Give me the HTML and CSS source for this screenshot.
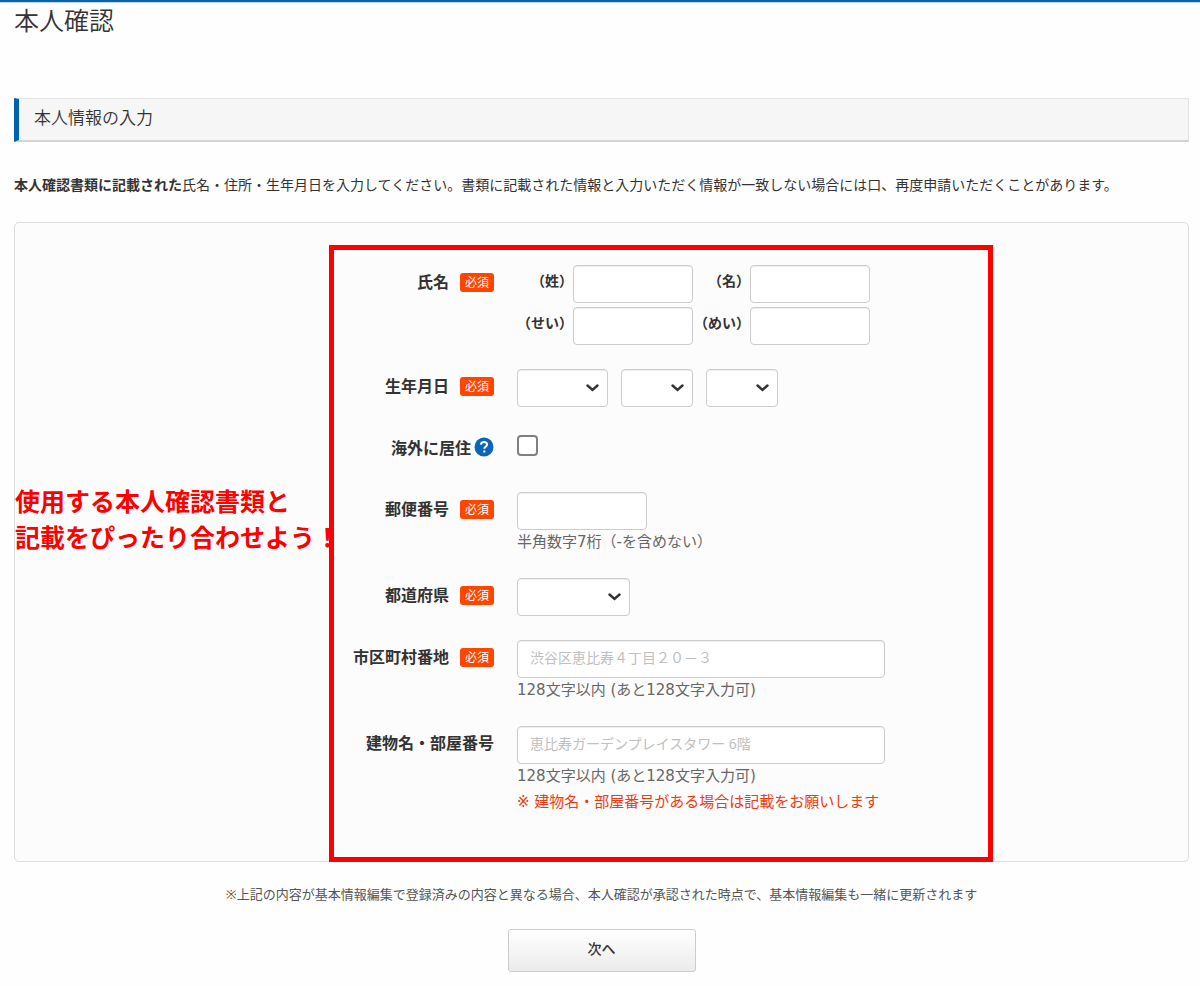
FILE: index.html
```html
<!DOCTYPE html>
<html lang="ja">
<head>
<meta charset="utf-8">
<meta name="viewport" content="width=device-width, initial-scale=1">
<title>本人確認</title>
<link rel="stylesheet" href="styles.css">
</head>
<body>
<main class="page">
  <h1 class="page-title">本人確認</h1>
  <h2 class="section-title">本人情報の入力</h2>
  <p class="intro"><strong>本人確認書類に記載された</strong>氏名・住所・生年月日を入力してください。書類に記載された情報と入力いただく情報が一致しない場合には口、再度申請いただくことがあります。</p>

  <form>
    <div class="panel">
      <p class="callout">使用する本人確認書類と<br>記載をぴったり合わせよう！</p>
      <div class="fields">
        <div class="row">
          <div class="row-label"><span>氏名</span><span class="tag">必須</span></div>
          <div class="names">
            <label for="sei">（姓）</label><input class="box" id="sei" type="text">
            <label for="mei">（名）</label><input class="box" id="mei" type="text">
            <label for="sei-kana">（せい）</label><input class="box" id="sei-kana" type="text">
            <label for="mei-kana">（めい）</label><input class="box" id="mei-kana" type="text">
          </div>
        </div>

        <div class="row">
          <div class="row-label"><label for="year">生年月日</label><span class="tag">必須</span></div>
          <div class="dates">
            <span class="select year"><select class="box" id="year" aria-label="年"><option></option></select><svg class="chevron" viewBox="0 0 12 8"><path d="M1 1.5 6 6l5-4.5"/></svg></span>
            <span class="select day"><select class="box" aria-label="月"><option></option></select><svg class="chevron" viewBox="0 0 12 8"><path d="M1 1.5 6 6l5-4.5"/></svg></span>
            <span class="select day"><select class="box" aria-label="日"><option></option></select><svg class="chevron" viewBox="0 0 12 8"><path d="M1 1.5 6 6l5-4.5"/></svg></span>
          </div>
        </div>

        <div class="row">
          <div class="row-label help-label"><label for="overseas">海外に居住</label><svg class="help-icon" viewBox="0 0 20 20" role="img" aria-label="ヘルプ"><circle cx="10" cy="9" r="9.5"/><path d="M6.9 6.6C7 4.8 8.2 3.9 10 3.9s3.1 1 3.1 2.5c0 2.2-2.8 2.2-2.8 4.3M10.3 12.4v2"/></svg></div>
          <div class="check-cell"><input class="check" id="overseas" type="checkbox"></div>
        </div>

        <div class="row">
          <div class="row-label"><label for="zip">郵便番号</label><span class="tag">必須</span></div>
          <div>
            <input class="box zip" id="zip" type="text">
            <p class="hint">半角数字7桁（-を含めない）</p>
          </div>
        </div>

        <div class="row">
          <div class="row-label"><label for="pref">都道府県</label><span class="tag">必須</span></div>
          <div>
            <span class="select pref"><select class="box" id="pref"><option></option></select><svg class="chevron" viewBox="0 0 12 8"><path d="M1 1.5 6 6l5-4.5"/></svg></span>
          </div>
        </div>

        <div class="row">
          <div class="row-label"><label for="city">市区町村番地</label><span class="tag">必須</span></div>
          <div>
            <input class="box address" id="city" type="text" placeholder="渋谷区恵比寿４丁目２０－３">
            <p class="hint">128文字以内 (あと128文字入力可)</p>
          </div>
        </div>

        <div class="row">
          <div class="row-label"><label for="building">建物名・部屋番号</label></div>
          <div>
            <input class="box address" id="building" type="text" placeholder="恵比寿ガーデンプレイスタワー 6階">
            <p class="hint">128文字以内 (あと128文字入力可)</p>
            <p class="hint warning">※ 建物名・部屋番号がある場合は記載をお願いします</p>
          </div>
        </div>
      </div>
    </div>

    <p class="footnote">※上記の内容が基本情報編集で登録済みの内容と異なる場合、本人確認が承認された時点で、基本情報編集も一緒に更新されます</p>
    <button class="next" type="submit">次へ</button>
  </form>
</main>
</body>
</html>
```

FILE: styles.css
```css
* { box-sizing: border-box; }

body {
  margin: 0;
  background: #fefefe;
  color: #333;
  font-family: "Noto Sans", "Noto Sans CJK JP", sans-serif;
  font-size: 14px;
  line-height: 24px;
}

h1, h2, p { margin: 0; }

input, select, button { font: inherit; color: inherit; margin: 0; }

.page {
  border-top: 2px solid #0a63ac;
  box-shadow: inset 0 1px #b9d7ee;
  padding: 0 11px 14px 14px;
}

.page-title {
  font-size: 25px;
  font-weight: 350;
  line-height: 36px;
}

.section-title {
  margin-top: 60px;
  padding: 0 15px 3px;
  border: 1px solid #e4e4e4;
  border-left: 5px solid #0063b0;
  border-bottom: 2px solid #d4d4d4;
  background: #f6f6f6;
  font-size: 17px;
  font-weight: 350;
  line-height: 38px;
}

.intro { margin: 31px 0 25px; }

.panel {
  display: grid;
  grid-template-columns: 314px minmax(0, 664px) 1fr;
  padding-top: 22px;
  border: 1px solid #ddd;
  border-radius: 5px;
  background: #fcfcfc;
}

.callout {
  padding-top: 238px;
  color: #fe0000;
  font-size: 25px;
  font-weight: 700;
  line-height: 36px;
  white-space: nowrap;
}

.fields {
  display: flex;
  flex-direction: column;
  gap: 24px;
  margin-bottom: -1px;
  padding: 15px 0 43px;
  border: 5px solid #fe0000;
}

.row {
  display: grid;
  grid-template-columns: 160px 1fr;
  column-gap: 23px;
}

.row-label {
  display: flex;
  align-items: center;
  align-self: start;
  justify-content: flex-end;
  gap: 11px;
  padding-top: 5px;
  font-size: 16px;
  font-weight: 700;
  white-space: nowrap;
}

.help-label { gap: 3px; }

.tag {
  padding: 0 5px;
  border-radius: 3px;
  background: #ff4500;
  color: #fff;
  font-size: 12px;
  font-weight: 400;
  line-height: 19px;
}

.help-icon { width: 20px; height: 20px; overflow: visible; }
.help-icon circle { fill: #0a66b4; }
.help-icon path { fill: none; stroke: #fff; stroke-width: 2; }

.box {
  display: block;
  width: 100%;
  height: 38px;
  padding: 0 12px 4px;
  border: 1px solid #ccc;
  border-radius: 4px;
  background: #fff;
  box-shadow: inset 0 1px 1px #eee;
  appearance: none;
}

.box::placeholder { color: #c0c0c0; opacity: 1; }

.names {
  display: grid;
  grid-template-columns: 56px 120px 57px 120px;
  row-gap: 4px;
}

.names label {
  justify-self: end;
  padding-top: 4px;
  font-size: 14px;
  font-weight: 700;
  white-space: nowrap;
}

.dates { display: flex; gap: 13px; }

.select { position: relative; display: block; }
.year { width: 91px; }
.day { width: 72px; }
.pref { width: 113px; }
.zip { width: 130px; }
.address { width: 368px; }

.chevron {
  position: absolute;
  top: 15px;
  right: 9px;
  width: 13px;
  height: 8px;
  fill: none;
  stroke: #333;
  stroke-width: 2.4;
  stroke-linecap: round;
  pointer-events: none;
}

.check-cell { height: 37px; padding-top: 4px; }

.check {
  display: block;
  width: 21px;
  height: 21px;
  border: 2px solid #808080;
  border-radius: 4px;
  background: #fff;
  appearance: none;
}

.hint {
  color: #666;
  font-family: "DejaVu Sans", "Noto Sans CJK JP", sans-serif;
  font-size: 15px;
}

.warning { margin-top: 2px; color: #f03a10; }

.footnote {
  margin: 20px 0 23px;
  color: #555;
  font-size: 13px;
  text-align: center;
}

.next {
  display: block;
  width: 188px;
  height: 43px;
  margin: 0 auto;
  padding: 0 0 4px;
  border: 1px solid #ccc;
  border-radius: 3px;
  background: linear-gradient(#fff, #ebebeb);
  font-weight: 500;
}
```
